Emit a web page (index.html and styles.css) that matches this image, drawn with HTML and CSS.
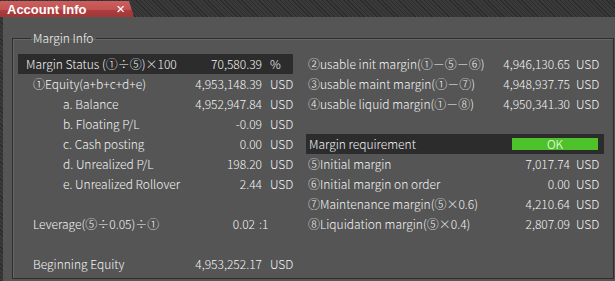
FILE: index.html
```html
<!DOCTYPE html>
<html lang="en">
<head>
    <meta charset="UTF-8">
    <meta name="viewport" content="width=device-width, initial-scale=1.0">
    <title>Account Info</title>
    <link rel="stylesheet" href="styles.css">
</head>
<body>
    <div class="top">
        <div class="tab">
            <span class="tab-title">Account Info</span>
            <span class="tab-close">&#215;</span>
        </div>
    </div>
    <div class="panel">
        <fieldset class="group">
            <legend>Margin Info</legend>
            <div class="columns">
                <div class="col col-left">
                    <div class="row band">
                        <span class="label pad-1">Margin Status (①÷⑤)×100</span>
                        <span class="value">70,580.39</span>
                        <span class="unit">%</span>
                    </div>
                    <div class="row">
                        <span class="label pad-2">①Equity(a+b+c+d+e)</span>
                        <span class="value">4,953,148.39</span>
                        <span class="unit">USD</span>
                    </div>
                    <div class="row">
                        <span class="label pad-3">a. Balance</span>
                        <span class="value">4,952,947.84</span>
                        <span class="unit">USD</span>
                    </div>
                    <div class="row">
                        <span class="label pad-3">b. Floating P/L</span>
                        <span class="value">-0.09</span>
                        <span class="unit">USD</span>
                    </div>
                    <div class="row">
                        <span class="label pad-3">c. Cash posting</span>
                        <span class="value">0.00</span>
                        <span class="unit">USD</span>
                    </div>
                    <div class="row">
                        <span class="label pad-3">d. Unrealized P/L</span>
                        <span class="value">198.20</span>
                        <span class="unit">USD</span>
                    </div>
                    <div class="row">
                        <span class="label pad-3">e. Unrealized Rollover</span>
                        <span class="value">2.44</span>
                        <span class="unit">USD</span>
                    </div>
                    <div class="row"></div>
                    <div class="row ratio">
                        <span class="label pad-2">Leverage(⑤÷0.05)÷①</span>
                        <span class="value">0.02</span>
                        <span class="unit">:1</span>
                    </div>
                    <div class="row"></div>
                    <div class="row">
                        <span class="label pad-2">Beginning Equity</span>
                        <span class="value">4,953,252.17</span>
                        <span class="unit">USD</span>
                    </div>
                </div>
                <div class="col col-right">
                    <div class="row">
                        <span class="label">②usable init margin(①－⑤－⑥)</span>
                        <span class="value">4,946,130.65</span>
                        <span class="unit">USD</span>
                    </div>
                    <div class="row">
                        <span class="label">③usable maint margin(①－⑦)</span>
                        <span class="value">4,948,937.75</span>
                        <span class="unit">USD</span>
                    </div>
                    <div class="row">
                        <span class="label">④usable liquid margin(①－⑧)</span>
                        <span class="value">4,950,341.30</span>
                        <span class="unit">USD</span>
                    </div>
                    <div class="row"></div>
                    <div class="row band">
                        <span class="label">Margin requirement</span>
                        <span class="status">OK</span>
                    </div>
                    <div class="row">
                        <span class="label">⑤Initial margin</span>
                        <span class="value">7,017.74</span>
                        <span class="unit">USD</span>
                    </div>
                    <div class="row">
                        <span class="label">⑥Initial margin on order</span>
                        <span class="value">0.00</span>
                        <span class="unit">USD</span>
                    </div>
                    <div class="row">
                        <span class="label">⑦Maintenance margin(⑤×0.6)</span>
                        <span class="value">4,210.64</span>
                        <span class="unit">USD</span>
                    </div>
                    <div class="row">
                        <span class="label">⑧Liquidation margin(⑤×0.4)</span>
                        <span class="value">2,807.09</span>
                        <span class="unit">USD</span>
                    </div>
                </div>
            </div>
        </fieldset>
    </div>
</body>
</html>
```

FILE: styles.css
```css
*{
    font-family: "Noto Sans CJK JP", "Liberation Sans", sans-serif;
    padding: 0;
    margin: 0;
    box-sizing: border-box;
}
body {
    width: 615px;
    height: 281px;
    overflow: hidden;
    background: repeating-linear-gradient(45deg, #2c2c2c 0 1px, #3a3a3a 1px 3px);
    color: #f4f4f4;
    font-size: 12px;
    font-weight: 300;
}
.top {
    height: 17px;
    display: flex;
    align-items: flex-end;
}
.tab {
    display: flex;
    align-items: center;
    justify-content: space-between;
    width: 134px;
    height: 16px;
    padding: 0 6px 0 7px;
    background: linear-gradient(#cc5e5e 0, #c25252 55%, #ab3d3d 56%, #a23737 100%);
    clip-path: polygon(0 0, 129px 0, 134px 100%, 0 100%);
}
.tab .tab-title {
    font-family: "Liberation Sans", sans-serif;
    font-weight: bold;
    font-size: 13px;
    color: white;
}
.tab .tab-close {
    font-family: "Liberation Sans", sans-serif;
    font-weight: normal;
    font-size: 15px;
    line-height: 14px;
    color: white;
    margin-right: 3px;
}
.panel {
    height: 264px;
    margin-left: 3px;
    background-color: #555555;
    padding: 14px 1px 0 9px;
}
.group {
    border: 1px solid #2e2e2e;
    box-shadow: inset 1px 1px 0 #666666;
    padding: 9px 9px 4px 5px;
}
.group legend {
    margin-left: 13px;
    padding: 0 2px;
    line-height: 14px;
    font-size: 12px;
}
.columns {
    display: flex;
    gap: 13px;
}
.col {
    display: flex;
    flex-direction: column;
}
.col-left {
    width: 275px;
}
.col-right {
    flex: 1;
}
.row {
    height: 20px;
    line-height: 20px;
    display: grid;
    align-items: center;
    white-space: nowrap;
}
.col-left .row {
    grid-template-columns: 1fr auto 23px;
    column-gap: 8px;
}
.col-left .row.ratio {
    grid-template-columns: 1fr auto 34px;
    column-gap: 4px;
}
.col-right .row {
    grid-template-columns: 1fr auto 28px;
    column-gap: 6px;
    padding-left: 2px;
}
.row.band {
    background-color: #2c2c2c;
}
.col-right .row.band {
    padding-left: 3px;
}
.pad-1 {
    padding-left: 8px;
}
.pad-2 {
    padding-left: 15px;
}
.pad-3 {
    padding-left: 45px;
}
.value {
    text-align: right;
}
.status {
    grid-column: 2 / 4;
    width: 86px;
    height: 12px;
    line-height: 12px;
    margin-right: 6px;
    text-align: center;
    background-color: #4fc22b;
    color: white;
}
```
